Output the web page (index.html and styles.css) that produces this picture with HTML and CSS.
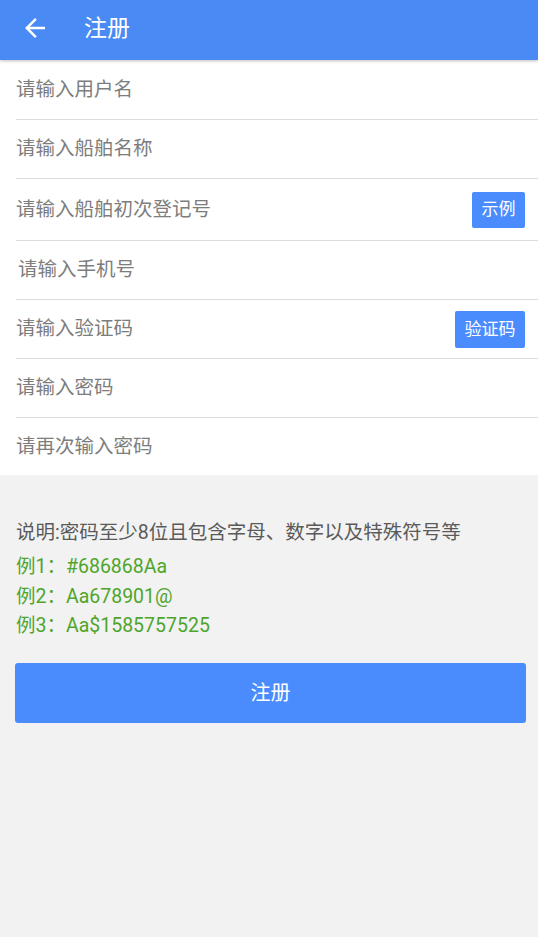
FILE: index.html
```html
<!DOCTYPE html>
<html lang="zh-CN">
<head>
<meta charset="utf-8">
<title>注册</title>
<link rel="stylesheet" href="styles.css">
</head>
<body>
<header class="topbar">
  <svg class="back" viewBox="0 0 24 24" width="30" height="30"><path d="M20 11H7.83l5.59-5.59L12 4l-8 8 8 8 1.41-1.41L7.83 13H20v-2z" fill="#fff"/></svg>
  <h1 class="title">注册</h1>
</header>
<section class="form">
  <div class="row r-first"><span class="ph">请输入用户名</span></div>
  <div class="row"><span class="ph">请输入船舶名称</span></div>
  <div class="row r-tall"><span class="ph">请输入船舶初次登记号</span><button class="btn-small">示例</button></div>
  <div class="row"><span class="ph ph-indent">请输入手机号</span></div>
  <div class="row"><span class="ph">请输入验证码</span><button class="btn-small btn-code">验证码</button></div>
  <div class="row"><span class="ph">请输入密码</span></div>
  <div class="row r-last"><span class="ph">请再次输入密码</span></div>
</section>
<section class="info">
  <p class="desc">说明:密码至少8位且包含字母、数字以及特殊符号等</p>
  <p class="ex">例1：#686868Aa</p>
  <p class="ex">例2：Aa678901@</p>
  <p class="ex">例3：Aa$1585757525</p>
  <button class="submit">注册</button>
</section>
</body>
</html>
```
FILE: styles.css
```css
html, body {
  margin: 0;
  padding: 0;
  background: #f2f2f2;
  font-family: Roboto, "Noto Sans CJK SC", "Noto Sans", sans-serif;
}
.topbar {
  height: 60px;
  background: #4a8af4;
  display: flex;
  align-items: center;
  box-shadow: 0 1px 3px rgba(0,0,0,0.25);
  position: relative;
  z-index: 1;
}
.back {
  width: 30px;
  height: 30px;
  margin-left: 20px;
  margin-top: -4px;
}
.title {
  margin: 0 0 0 34px;
  font-size: 23px;
  font-weight: normal;
  color: #fff;
  line-height: 1;
  margin-top: -4px;
}
.form {
  background: #fff;
  padding-left: 16px;
}
.row {
  height: 58px;
  border-bottom: 1px solid #dcdcdc;
  display: flex;
  align-items: center;
  justify-content: space-between;
  padding-right: 13px;
}
.r-first { height: 59px; }
.r-tall { height: 61px; }
.r-last { height: 57px; border-bottom: none; }
.ph {
  font-size: 19.5px;
  color: #7d7d7d;
  line-height: 1;
}
.ph-indent { margin-left: 2px; }
.btn-small {
  border: none;
  background: #4a8cfe;
  color: #fff;
  font-family: inherit;
  font-size: 17px;
  width: 53px;
  height: 36px;
  border-radius: 2px;
  padding: 0;
  line-height: 1;
}
.btn-code {
  width: 70px;
  height: 37px;
}
.info {
  padding: 43px 13px 0 16px;
}
.desc {
  margin: 0 0 4px 0;
  font-size: 19.5px;
  line-height: 30px;
  color: #5a5a5a;
}
.ex {
  margin: 0;
  font-size: 19.5px;
  line-height: 29.5px;
  color: #4fa52a;
}
.submit {
  display: block;
  margin: 22px 0 0 -1px;
  width: 511px;
  height: 60px;
  border: none;
  border-radius: 3px;
  background: #4a8cfe;
  color: #fff;
  font-family: inherit;
  font-size: 20px;
  padding: 0 0 2px 0;
}
```
